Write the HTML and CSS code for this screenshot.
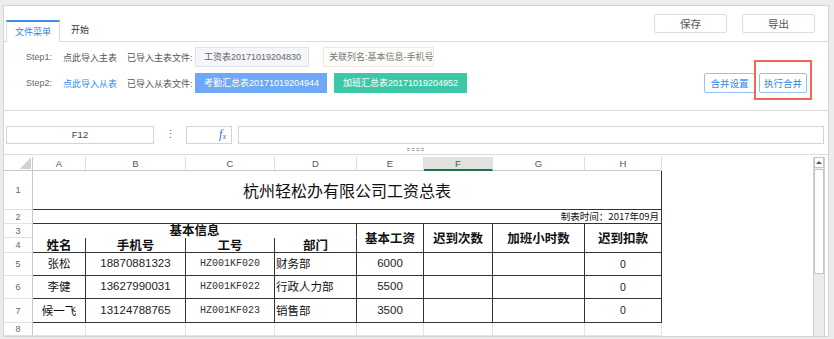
FILE: index.html
```html
<!DOCTYPE html>
<html lang="zh-CN">
<head>
    <meta charset="UTF-8">
    <meta name="viewport" content="width=device-width, initial-scale=1.0">
    <title>工资表合并</title>
    <link rel="stylesheet" href="styles.css">
</head>
<body>
<div class="app">

    <div class="menu">
        <div class="tab active">文件菜单</div>
        <div class="tab">开始</div>
        <div class="menu-buttons">
            <button class="btn">保存</button>
            <button class="btn">导出</button>
        </div>
    </div>

    <div class="steps">
        <div class="step-row">
            <span class="step-label">Step1:</span>
            <span class="step-link">点此导入主表</span>
            <span class="step-file">已导入主表文件:</span>
            <span class="file-tag plain">工资表20171019204830</span>
            <span class="file-tag key">关联列名:基本信息-手机号</span>
        </div>
        <div class="step-row">
            <span class="step-label">Step2:</span>
            <span class="step-link on">点此导入从表</span>
            <span class="step-file">已导入从表文件:</span>
            <span class="file-tag blue">考勤汇总表20171019204944</span>
            <span class="file-tag teal">加班汇总表20171019204952</span>
            <div class="merge-buttons">
                <button class="btn-line set">合并设置</button>
                <span class="marked"><button class="btn-line run">执行合并</button></span>
            </div>
        </div>
    </div>

    <div class="formula">
        <div class="formula-row">
            <div class="name-box">F12</div>
            <span class="dots">&#8942;</span>
            <div class="fx-box"><i>f<span class="fx-x">x</span></i></div>
            <div class="formula-input"></div>
        </div>
        <div class="handle"><span></span></div>
    </div>

    <div class="sheet">
        <div class="grid">
            <div class="corner"></div>
            <div class="col-head">A</div>
            <div class="col-head">B</div>
            <div class="col-head">C</div>
            <div class="col-head">D</div>
            <div class="col-head">E</div>
            <div class="col-head sel">F</div>
            <div class="col-head">G</div>
            <div class="col-head">H</div>
            <div class="blank"></div>

            <div class="row-head">1</div>
            <div class="cell title span8 dr db">杭州轻松办有限公司工资总表</div>
            <div class="blank"></div>

            <div class="row-head">2</div>
            <div class="cell stamp span8 dr db">制表时间：2017年09月</div>
            <div class="blank"></div>

            <div class="row-head">3</div>
            <div class="cell head span4 dr nb">基本信息</div>
            <div class="cell head tall dr db">基本工资</div>
            <div class="cell head tall dr db">迟到次数</div>
            <div class="cell head tall dr db">加班小时数</div>
            <div class="cell head tall dr db">迟到扣款</div>
            <div class="blank"></div>

            <div class="row-head">4</div>
            <div class="cell head dr db">姓名</div>
            <div class="cell head dr db">手机号</div>
            <div class="cell head dr db">工号</div>
            <div class="cell head dr db">部门</div>
            <div class="blank"></div>

            <div class="row-head">5</div>
            <div class="cell name dr db">张松</div>
            <div class="cell num dr db">18870881323</div>
            <div class="cell code dr db">HZ001KF020</div>
            <div class="cell dept dr db">财务部</div>
            <div class="cell num dr db">6000</div>
            <div class="cell dr db"></div>
            <div class="cell dr db"></div>
            <div class="cell num small dr db">0</div>
            <div class="blank"></div>

            <div class="row-head">6</div>
            <div class="cell name dr db">李健</div>
            <div class="cell num dr db">13627990031</div>
            <div class="cell code dr db">HZ001KF022</div>
            <div class="cell dept dr db">行政人力部</div>
            <div class="cell num dr db">5500</div>
            <div class="cell dr db"></div>
            <div class="cell dr db"></div>
            <div class="cell num small dr db">0</div>
            <div class="blank"></div>

            <div class="row-head">7</div>
            <div class="cell name dr db">候一飞</div>
            <div class="cell num dr db">13124788765</div>
            <div class="cell code dr db">HZ001KF023</div>
            <div class="cell dept dr db">销售部</div>
            <div class="cell num dr db">3500</div>
            <div class="cell dr db"></div>
            <div class="cell dr db"></div>
            <div class="cell num small dr db">0</div>
            <div class="blank"></div>

            <div class="row-head">8</div>
            <div class="cell"></div>
            <div class="cell"></div>
            <div class="cell"></div>
            <div class="cell"></div>
            <div class="cell"></div>
            <div class="cell"></div>
            <div class="cell"></div>
            <div class="cell"></div>
            <div class="blank"></div>
        </div>

        <div class="scrollbar">
            <div class="arrow"></div>
            <div class="thumb"></div>
        </div>
    </div>

</div>
</body>
</html>
```

FILE: styles.css
```css
* {
    box-sizing: border-box;
}

body {
    margin: 0;
    padding: 5px 5px 2px 3px;
    background-color: #ececec;
    font-family: 'Liberation Sans', 'Noto Sans CJK SC', sans-serif;
}

.app {
    height: 332px;
    border: 1px solid #d3d3d3;
    background-color: #fff;
    display: flex;
    flex-direction: column;
}

/* top menu */

.menu {
    height: 36px;
    flex-shrink: 0;
    border-bottom: 1px solid #dcdcdc;
    display: flex;
    align-items: flex-end;
    padding-left: 2px;
}

.tab {
    height: 22px;
    line-height: 20px;
    margin-bottom: -1px;
    padding: 0 11px;
    font-size: 9px;
    color: #333;
}

.tab.active {
    width: 54px;
    padding: 0;
    text-align: center;
    border-top: 2px solid #3d8fe8;
    border-left: 1px solid #dcdcdc;
    border-right: 1px solid #dcdcdc;
    background-color: #fff;
    color: #2f86e0;
}

.menu-buttons {
    margin-left: auto;
    margin-right: 13px;
    align-self: center;
    display: flex;
    gap: 15px;
}

.btn {
    width: 73px;
    height: 19px;
    padding: 0;
    border: 1px solid #dedede;
    border-radius: 2px;
    background-color: #fff;
    color: #555;
    font-family: inherit;
    font-size: 10.5px;
}

/* import steps */

.steps {
    height: 69px;
    flex-shrink: 0;
    border-bottom: 1px solid #dcdcdc;
    padding: 5px 21px 0 22px;
    display: flex;
    flex-direction: column;
    gap: 6px;
}

.step-row {
    height: 20px;
    display: flex;
    align-items: center;
    font-size: 9px;
    color: #666;
}

.step-label {
    width: 37px;
}

.step-link {
    width: 64px;
    color: #555;
}

.step-link.on {
    color: #2d8cf0;
}

.step-file {
    width: 68px;
    color: #555;
}

.file-tag {
    height: 20px;
    line-height: 18px;
    padding: 0 8px;
    border: 1px solid transparent;
    white-space: nowrap;
}

.file-tag.plain {
    width: 114px;
    background-color: #f4f6f9;
    border-color: #dfe3ea;
    color: #666;
}

.file-tag.key {
    width: 111px;
    margin-left: 14px;
    padding: 0 5px;
    background-color: #fdfcf9;
    border-color: #efe7da;
    color: #777;
}

.file-tag.blue {
    width: 132px;
    background-color: #6ea8f6;
    color: #fff;
}

.file-tag.teal {
    width: 133px;
    margin-left: 7px;
    background-color: #3cc8a6;
    color: #fff;
}

.merge-buttons {
    margin-left: auto;
    display: flex;
    gap: 4px;
}

.btn-line {
    height: 20px;
    padding: 0;
    border: 1px solid #8ec3f4;
    border-radius: 2px;
    background-color: #fff;
    color: #2f88e8;
    font-family: inherit;
    font-size: 9.5px;
}

.btn-line.set {
    width: 51px;
}

.btn-line.run {
    width: 48px;
}

.marked {
    position: relative;
    display: flex;
}

.marked::after {
    content: "";
    position: absolute;
    left: -5px;
    right: -5px;
    top: -13px;
    bottom: -7px;
    border: 2px solid #f26656;
}

/* formula bar */

.formula {
    height: 44px;
    flex-shrink: 0;
    border-bottom: 1px solid #dcdcdc;
    padding: 15px 4px 0 2px;
}

.formula-row {
    height: 18px;
    display: flex;
}

.name-box {
    width: 148px;
    border: 1px solid #d4d4d4;
    text-align: center;
    line-height: 16px;
    font-size: 9.5px;
    color: #444;
}

.dots {
    width: 32px;
    text-align: center;
    line-height: 16px;
    font-size: 11px;
    color: #666;
}

.fx-box {
    width: 46px;
    border: 1px solid #d4d4d4;
    text-align: right;
    padding-right: 5px;
    line-height: 15px;
    font-family: 'Liberation Serif', serif;
    font-size: 12px;
    color: #3670c6;
}

.fx-x {
    font-size: 8px;
    vertical-align: -1px;
}

.formula-input {
    flex: 1;
    margin-left: 6px;
    border: 1px solid #d4d4d4;
}

.handle {
    height: 10px;
    display: flex;
    align-items: center;
    justify-content: center;
}

.handle span {
    width: 17px;
    height: 3px;
    border-top: 1px dashed #aaa;
    border-bottom: 1px dashed #aaa;
}

/* sheet */

.sheet {
    flex: 1;
    padding-top: 2px;
    display: flex;
}

.grid {
    flex: 1;
    display: grid;
    grid-template-columns: 29px 53px 100px 89px 82px 67px 69px 92px 77px 1fr;
    grid-template-rows: 14px 39px 14px 14px 15px 23px 23px 24px 13px;
    font-family: 'Noto Sans CJK SC', sans-serif;
    color: #111;
}

.corner {
    border-right: 1px solid #c8c8c8;
    border-bottom: 1px solid #c8c8c8;
    background: linear-gradient(to top left, #d2d2d2 50%, transparent 50%) right 1px bottom 1px / 12px 11px no-repeat;
}

.col-head {
    border-right: 1px solid #dedede;
    border-bottom: 1px solid #c8c8c8;
    text-align: center;
    line-height: 13px;
    font-family: 'Liberation Sans', sans-serif;
    font-size: 9.5px;
    color: #555;
}

.col-head.sel {
    background-color: #e1e1e1;
    border-bottom: 2px solid #217346;
    color: #217346;
}

.row-head {
    border-right: 1px solid #c8c8c8;
    border-bottom: 1px solid #e2e2e2;
    display: flex;
    align-items: center;
    justify-content: center;
    font-family: 'Liberation Sans', sans-serif;
    font-size: 9px;
    color: #666;
}

.blank {
    background-color: #fff;
}

.cell {
    border-right: 1px solid #e4e4e4;
    border-bottom: 1px solid #e4e4e4;
    display: flex;
    align-items: center;
    justify-content: center;
    line-height: 1;
    white-space: nowrap;
}

.dr {
    border-right-color: #333;
}

.db {
    border-bottom-color: #333;
}

.nb {
    border-bottom-color: #fff;
}

.span8 {
    grid-column: span 8;
}

.span4 {
    grid-column: span 4;
}

.tall {
    grid-row: span 2;
}

.title {
    font-size: 16px;
}

.stamp {
    justify-content: flex-end;
    padding-right: 2px;
    font-size: 9.5px;
}

.head {
    font-size: 12.5px;
    font-weight: bold;
}

.name {
    font-size: 11.5px;
}

.num {
    font-family: 'Liberation Sans', sans-serif;
    font-size: 11.5px;
    color: #222;
}

.num.small {
    font-size: 10.5px;
}

.code {
    font-family: 'Liberation Mono', monospace;
    font-size: 10px;
    color: #333;
}

.dept {
    justify-content: flex-start;
    padding-left: 1px;
    font-size: 11.5px;
}

.scrollbar {
    width: 12px;
    margin-right: 3px;
    border-left: 1px solid #cfcfcf;
    border-right: 1px solid #cfcfcf;
    background-color: #ebebeb;
    display: flex;
    flex-direction: column;
}

.arrow {
    height: 11px;
    border: 1px solid #c4c4c4;
    background-color: #fff;
    display: flex;
    align-items: center;
    justify-content: center;
}

.arrow::after {
    content: "";
    border-left: 3px solid transparent;
    border-right: 3px solid transparent;
    border-bottom: 3px solid #555;
}

.thumb {
    height: 105px;
    margin-top: 1px;
    border: 1px solid #c4c4c4;
    background-color: #fff;
}
```
